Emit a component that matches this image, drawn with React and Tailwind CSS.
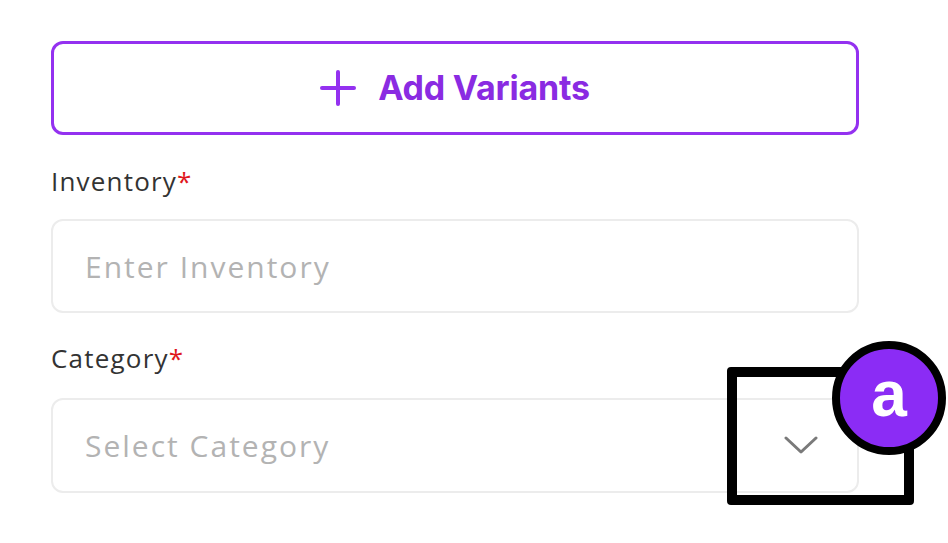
const Label = ({ children }) => (
    <div className="text-[26px] leading-none text-[#333333] tracking-[1.2px]">
        {children}
        <span className="text-[#e0161c]">*</span>
    </div>
);

const PlusIcon = () => (
    <svg width="36" height="36" viewBox="0 0 36 36" fill="none" stroke="#9431f0" strokeWidth="4" strokeLinecap="round">
        <line x1="18" y1="2" x2="18" y2="34" />
        <line x1="2" y1="18" x2="34" y2="18" />
    </svg>
);

const Chevron = () => (
    <svg width="34" height="19" viewBox="0 0 34 19" fill="none" stroke="#7a7a7a" strokeWidth="3" strokeLinecap="round" strokeLinejoin="round">
        <polyline points="2,2 17,16 32,2" />
    </svg>
);

export default function App() {
    return (
        <div className="w-[948px] h-[543px] bg-white relative overflow-hidden font-['Open_Sans',sans-serif]">
            <div className="pl-[51px] pt-[41px] w-[859px] flex flex-col">
                {/* Кнопка вариантов */}
                <button className="h-[94px] w-full rounded-[12px] border-[3px] border-[#9431f0] flex items-center justify-center gap-[22px] text-[#8a2be2]">
                    <PlusIcon />
                    <span className="font-['Inter',sans-serif] font-bold text-[34px] leading-none tracking-[-0.2px]">Add Variants</span>
                </button>

                <div className="mt-[33px]">
                    <Label>Inventory</Label>
                </div>
                <div className="mt-[25px] h-[94px] rounded-[12px] border-2 border-[#ececec] flex items-center px-[32px]">
                    <span className="text-[30px] tracking-[2px] text-[#b3b3b3]">Enter Inventory</span>
                </div>

                <div className="mt-[32px]">
                    <Label>Category</Label>
                </div>
                <div className="mt-[27px] h-[95px] rounded-[12px] border-2 border-[#ececec] flex items-center justify-between pl-[32px] pr-[39px]">
                    <span className="text-[30px] tracking-[2px] text-[#b3b3b3]">Select Category</span>
                    <Chevron />
                </div>
            </div>

            {/* Аннотация */}
            <div className="absolute left-[727px] top-[367px] w-[187px] h-[138px] border-[10px] border-black rounded-[4px]" />
            <div className="absolute left-[832px] top-[341px] w-[114px] h-[114px] rounded-full bg-[#8b2cf5] border-[8px] border-black flex items-center justify-center">
                <span className="text-white font-['Liberation_Sans',sans-serif] font-bold text-[64px] leading-none -mt-[8px]">a</span>
            </div>
        </div>
    );
}
